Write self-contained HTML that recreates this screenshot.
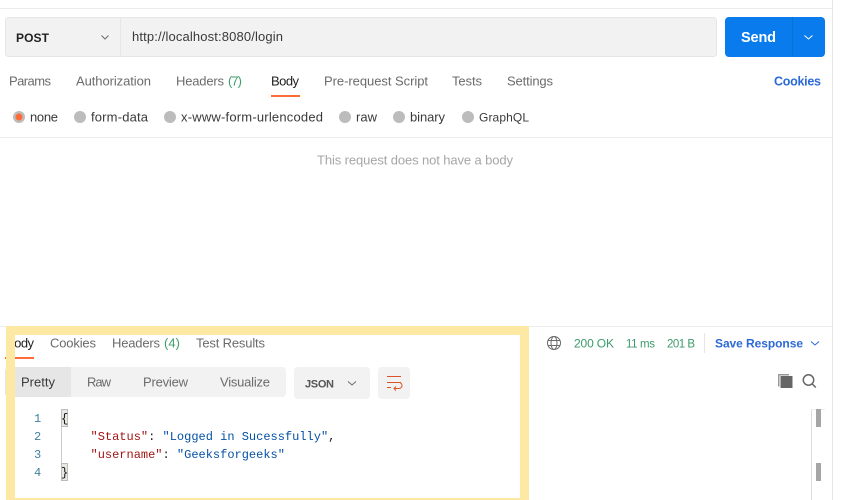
<!DOCTYPE html>
<html><head><meta charset="utf-8"><title>Postman</title>
<style>
html,body{margin:0;padding:0;background:#fff;width:849px;height:500px;overflow:hidden}
svg{display:block;position:absolute;left:0;top:0}
text{font-family:"Liberation Sans",sans-serif;font-size:13px;fill:#6b6b6b}
.d{fill:#212121}
.b{font-weight:bold}
.m{font-family:"Liberation Mono",monospace;font-size:12px}
</style></head><body>
<svg width="849" height="500" viewBox="0 0 849 500" xmlns="http://www.w3.org/2000/svg">
<rect width="849" height="500" fill="#fff"/>
<rect x="0" y="8" width="832" height="1" fill="#ededed"/>
<rect x="832" y="0" width="1" height="500" fill="#e6e6e6"/>

<!-- URL bar -->
<rect x="5.500" y="17.500" width="711" height="39" rx="3" fill="#f2f2f2" stroke="#e6e6e6"/>
<rect x="120" y="18" width="1" height="38" fill="#e6e6e6"/>
<text x="16" y="42" class="b" style="fill:#212121;font-size:12px" textLength="33">POST</text>
<path d="M101.500 35.500l3.500 3.500 3.500-3.500" fill="none" stroke="#6b6b6b"/>
<text x="132" y="41" class="d" style="fill:#3a3a3a" textLength="151">http://localhost:8080/login</text>
<rect x="725" y="17" width="100" height="40" rx="4" fill="#097bed"/>
<rect x="792" y="17" width="1" height="40" fill="#0a6fd6"/>
<text x="741" y="42" class="b" style="fill:#fff;font-size:14.500px" textLength="35">Send</text>
<path d="M804.500 35.500l4 3.500 4-3.500" fill="none" stroke="#fff"/>

<!-- Request tabs -->
<text x="9" y="85.500" textLength="42">Params</text>
<text x="76" y="85.500" textLength="75">Authorization</text>
<text x="176" y="85.500" textLength="48">Headers</text>
<text x="228" y="85.500" style="fill:#3f9e6a" textLength="14">(7)</text>
<text x="271" y="85.500" class="d" textLength="28">Body</text>
<rect x="271" y="95" width="29" height="2" fill="#ff6c37"/>
<text x="324" y="85.500" textLength="104">Pre-request Script</text>
<text x="452" y="85.500" textLength="30">Tests</text>
<text x="507" y="85.500" textLength="46">Settings</text>
<text x="774" y="85.500" class="b" style="fill:#2d6ad6;font-size:12.500px" textLength="47">Cookies</text>

<!-- Body radios -->
<circle cx="19" cy="117" r="6" fill="#bcbcbc"/><circle cx="19" cy="117" r="3.500" fill="#ff6c37"/>
<text x="30" y="121.500" class="d" style="fill:#3a3a3a" textLength="28">none</text>
<circle cx="80" cy="117" r="6" fill="#bcbcbc"/>
<text x="91" y="121.500" style="fill:#3a3a3a" textLength="57">form-data</text>
<circle cx="170" cy="117" r="6" fill="#bcbcbc"/>
<text x="181" y="121.500" style="fill:#3a3a3a" textLength="142">x-www-form-urlencoded</text>
<circle cx="345" cy="117" r="6" fill="#bcbcbc"/>
<text x="356" y="121.500" style="fill:#3a3a3a" textLength="21">raw</text>
<circle cx="399" cy="117" r="6" fill="#bcbcbc"/>
<text x="410" y="121.500" style="fill:#3a3a3a" textLength="35">binary</text>
<circle cx="468" cy="117" r="6" fill="#bcbcbc"/>
<text x="479" y="121.500" style="fill:#3a3a3a;font-size:12px" textLength="50">GraphQL</text>
<rect x="0" y="137" width="832" height="1" fill="#ededed"/>
<text x="317" y="164.500" style="fill:#a6a6a6" textLength="196">This request does not have a body</text>

<!-- Response header -->
<rect x="0" y="326" width="832" height="1" fill="#ededed"/>
<text x="6" y="347.500" class="d" textLength="28">Body</text>
<rect x="5" y="357" width="29" height="2" fill="#ff6c37"/>
<text x="50" y="347.500" textLength="46">Cookies</text>
<text x="112" y="347.500" textLength="48">Headers</text>
<text x="164" y="347.500" style="fill:#3f9e6a" textLength="16">(4)</text>
<text x="196" y="347.500" textLength="69">Test Results</text>

<!-- Globe -->
<g fill="none" stroke="#6b6b6b">
<circle cx="554" cy="343" r="6.500"/>
<ellipse cx="554" cy="343" rx="3" ry="6.500"/>
<path d="M548 340.500h12M548 345.500h12"/>
</g>
<text x="574" y="347.500" style="fill:#3b9a6a;font-size:12px" textLength="40">200 OK</text>
<text x="626" y="347.500" style="fill:#3b9a6a;font-size:11.500px" textLength="29">11 ms</text>
<text x="667" y="347.500" style="fill:#3b9a6a;font-size:11.500px" textLength="28">201 B</text>
<rect x="704" y="333" width="1" height="20" fill="#e6e6e6"/>
<text x="715" y="347.500" class="b" style="fill:#2d6ad6;font-size:12px" textLength="88">Save Response</text>
<path d="M811 341.500l4 3.500 4-3.500" fill="none" stroke="#2d6ad6"/>

<!-- Response toolbar -->
<rect x="5" y="367" width="281" height="30" rx="4" fill="#f2f2f2"/>
<path d="M9 367h62v30h-62a4 4 0 0 1-4-4v-22a4 4 0 0 1 4-4z" fill="#e6e6e6"/>
<text x="21" y="386.500" class="d" style="fill:#3a3a3a" textLength="34">Pretty</text>
<text x="87" y="386.500" textLength="24">Raw</text>
<text x="143" y="386.500" textLength="45">Preview</text>
<text x="220" y="386.500" textLength="50">Visualize</text>
<rect x="294" y="367" width="76" height="32" rx="4" fill="#f2f2f2"/>
<text x="305" y="387.500" class="b" style="font-size:11px;fill:#555" textLength="29">JSON</text>
<path d="M348 381.500l4 3.500 4-3.500" fill="none" stroke="#6b6b6b"/>
<rect x="378" y="367" width="32" height="32" rx="4" fill="#f2f2f2"/>
<g fill="none" stroke="#d9542a" stroke-width="1">
<path d="M387 376.500h14M387 382.500h14"/>
<path d="M387 387.500h4M394 388.500h5a2.700 2.700 0 0 0 0-6"/>
<path d="M396 386.500l-2 2 2 2"/>
</g>
<path d="M778 374h11v1.500h-9.500v11h-1.500z" fill="#999"/>
<rect x="780.500" y="376" width="12" height="12" rx="0.500" fill="#666"/>
<g fill="none" stroke="#666" stroke-width="1.500">
<circle cx="808.500" cy="380" r="5.200"/><path d="M812.300 384l3.500 3.500"/>
</g>

<!-- Scrollbar -->
<rect x="811" y="409" width="1" height="91" fill="#dcdcdc"/>
<rect x="811" y="409" width="14" height="1" fill="#ededed"/>
<rect x="816" y="409" width="5" height="18" fill="#a6a6a6"/>
<rect x="816" y="463" width="5" height="18" fill="#a6a6a6"/>

<!-- Code -->
<text x="34" y="422" class="m" style="fill:#3f7f9f">1</text>
<text x="34" y="440" class="m" style="fill:#3f7f9f">2</text>
<text x="34" y="458" class="m" style="fill:#3f7f9f">3</text>
<text x="34" y="476" class="m" style="fill:#3f7f9f">4</text>
<rect x="61" y="427" width="1" height="36" fill="#cccccc"/>
<rect x="61.500" y="409.500" width="6" height="17" fill="#e6eae2" stroke="#bbb"/>
<rect x="61.500" y="463.500" width="6" height="17" fill="#e6eae2" stroke="#bbb"/>
<text x="61" y="422" class="m" style="fill:#111">{</text>
<text x="61" y="476" class="m" style="fill:#111">}</text>
<text x="90.500" y="440" class="m" xml:space="preserve"><tspan style="fill:#a31515">"Status"</tspan><tspan style="fill:#212121">: </tspan><tspan style="fill:#0451a5">"Logged in Sucessfully"</tspan><tspan style="fill:#212121">,</tspan></text>
<text x="90.500" y="458" class="m" xml:space="preserve"><tspan style="fill:#a31515">"username"</tspan><tspan style="fill:#212121">: </tspan><tspan style="fill:#0451a5">"Geeksforgeeks"</tspan></text>

<!-- Highlight frame -->
<path fill-rule="evenodd" fill="#fde9a4" d="M6 326H529V500H6zM15 335V498H520V335z"/>
</svg>
</body></html>
